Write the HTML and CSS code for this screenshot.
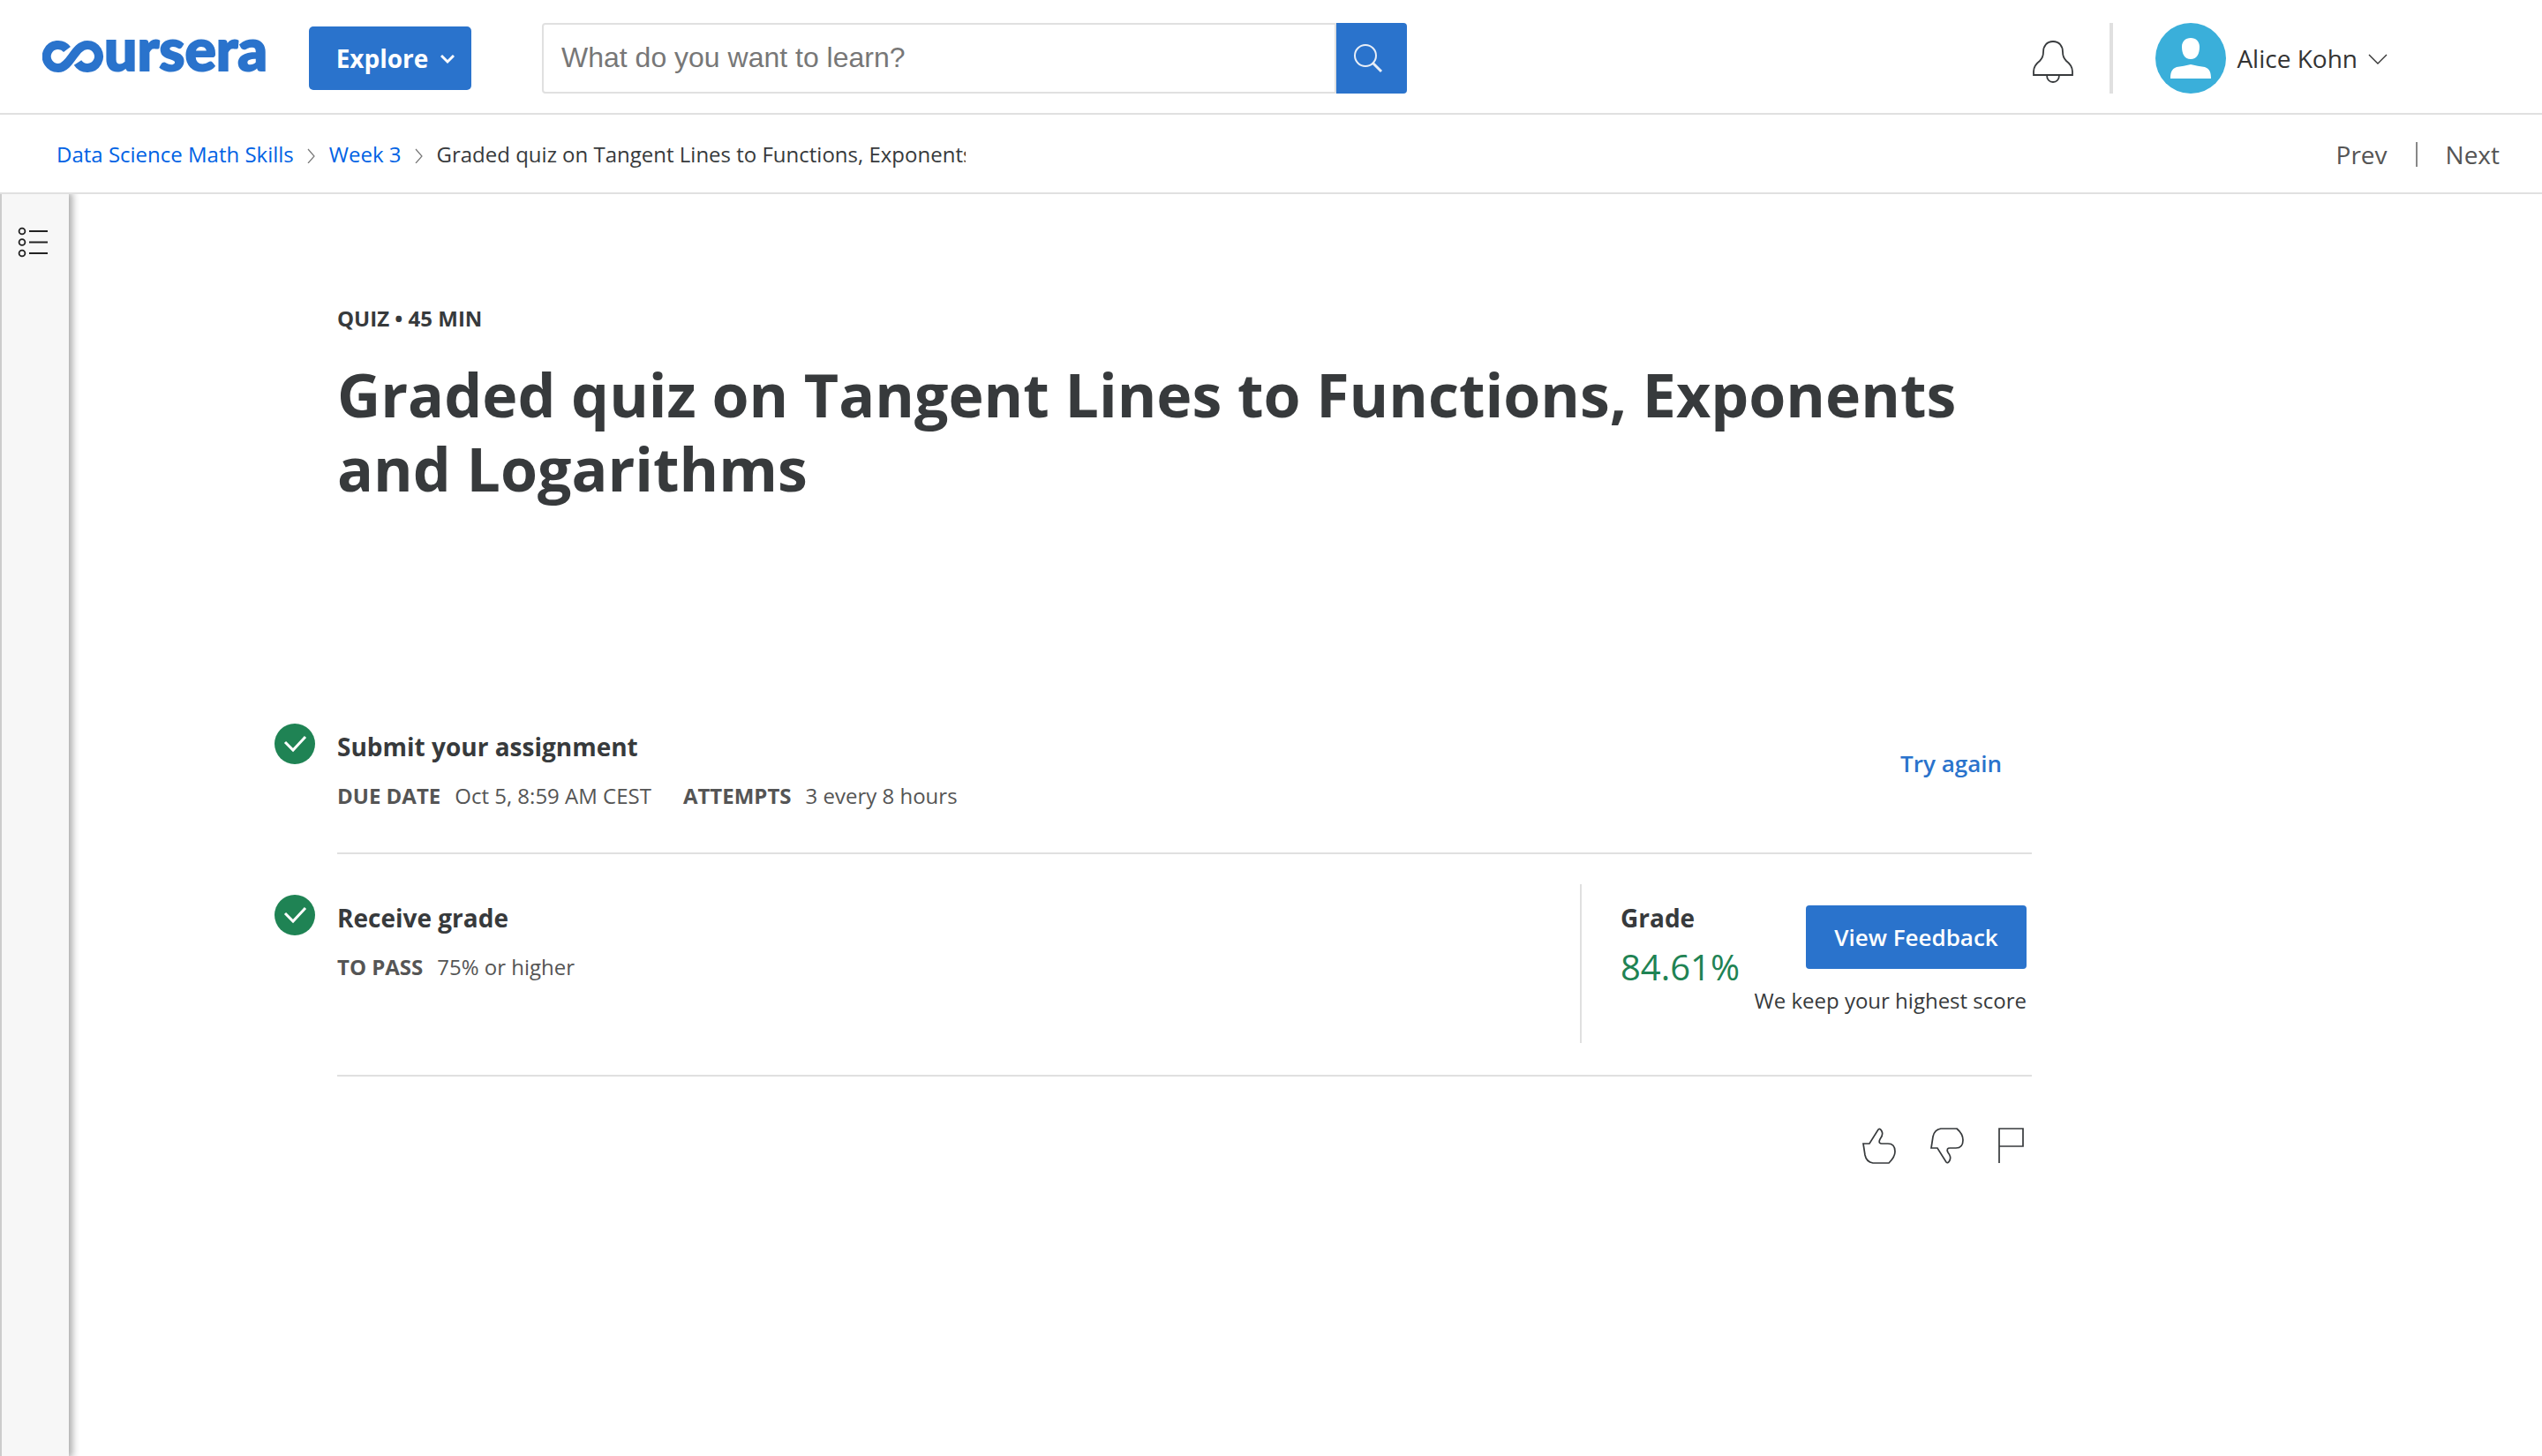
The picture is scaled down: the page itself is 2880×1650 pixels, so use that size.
FILE: index.html
```html
<!DOCTYPE html>
<html lang="en">
<head>
<meta charset="utf-8">
<title>Graded quiz on Tangent Lines to Functions, Exponents and Logarithms | Coursera</title>
<link rel="stylesheet" href="styles.css">
</head>
<body>
<header class="topbar">
  <a class="logo" href="#" aria-label="coursera">
    <svg width="256" height="88" viewBox="0 -26 256 88">
      <path d="M28 10A13 13 0 1 0 18 31C32 31 36 5 51 5A13 13 0 1 1 40 25" fill="none" stroke="currentColor" stroke-width="10"/>
      <text class="wordmark" x="70" y="34">ursera</text>
    </svg>
  </a>
  <button class="explore" type="button">Explore
    <svg width="16" height="14" viewBox="0 0 16 14"><path d="M1 4l7 7 7-7" fill="none" stroke="currentColor" stroke-width="3"/></svg>
  </button>
  <form class="search" role="search">
    <input class="search-field" type="text" aria-label="Search" placeholder="What do you want to learn?">
    <button class="search-button" type="submit" aria-label="Submit search">
      <svg width="34" height="34" viewBox="0 0 34 34"><g fill="none" stroke="currentColor" stroke-width="2"><circle cx="14" cy="14" r="12"/><path d="M22 22l10 10" stroke-width="3"/></g></svg>
    </button>
  </form>
  <div class="account">
    <button class="bell" type="button" aria-label="Notifications">
      <svg width="46" height="48" viewBox="0 0 46 48"><g fill="none" stroke="currentColor" stroke-width="1.8"><path d="M1 39V35C1 30 4 26 8 23C11 20 12 17 12 13C12 6 16 1 23 1S34 6 34 13C34 17 35 20 38 23C42 26 45 30 45 35V39Z"/><path d="M16 39C16 44 19 47 23 47S30 44 30 39"/></g></svg>
    </button>
    <button class="profile" type="button">
      <svg width="80" height="80" viewBox="0 0 80 80"><circle cx="40" cy="40" r="40" fill="#3aafda"/><path d="M40 17C34 17 30 21 30 27C30 35 33 41 40 41S50 35 50 27C50 21 46 17 40 17ZM17 63C17 57 18 52 24 50Q32 49 40 47Q48 49 56 50C62 52 63 57 63 63Z" fill="#fff"/></svg>
      <span>Alice Kohn</span>
      <svg width="22" height="14" viewBox="0 0 22 14"><path d="M1 3l10 10L21 3" fill="none" stroke="currentColor" stroke-width="1.4"/></svg>
    </button>
  </div>
</header>
<div class="subbar">
  <nav class="crumbs" aria-label="Breadcrumb">
    <a href="#">Data Science Math Skills</a>
    <svg width="10" height="20" viewBox="0 0 10 20"><path d="M1 4l7 8-7 8" fill="none" stroke="currentColor" stroke-width="1.2"/></svg>
    <a href="#">Week 3</a>
    <svg width="10" height="20" viewBox="0 0 10 20"><path d="M1 4l7 8-7 8" fill="none" stroke="currentColor" stroke-width="1.2"/></svg>
    <span class="crumb-current">Graded quiz on Tangent Lines to Functions, Exponents and Logarithms</span>
  </nav>
  <nav class="pager" aria-label="Items"><a href="#">Prev</a><a href="#">Next</a></nav>
</div>
<div class="body">
  <aside class="rail">
    <button type="button" aria-label="Open outline">
      <svg width="36" height="36" viewBox="0 0 36 36"><g fill="none" stroke="currentColor" stroke-width="1.8"><circle cx="5" cy="6" r="3.4"/><circle cx="5" cy="18.5" r="3.4"/><circle cx="5" cy="31" r="3.4"/><path d="M13 6h21M13 18.5h21M13 31h21"/></g></svg>
    </button>
  </aside>
  <main class="content">
    <p class="kind">QUIZ • 45 MIN</p>
    <h1>Graded quiz on Tangent Lines to Functions, Exponents and Logarithms</h1>
    <section class="step">
      <svg class="tick" width="46" height="46" viewBox="0 0 46 46"><circle cx="23" cy="23" r="23" fill="#1f8354"/><path d="M12 21l9 9 14-15" fill="none" stroke="#fff" stroke-width="3"/></svg>
      <div class="step-text">
        <h2>Submit your assignment</h2>
        <dl><div><dt>DUE DATE</dt><dd>Oct 5, 8:59 AM CEST</dd></div><div><dt>ATTEMPTS</dt><dd>3 every 8 hours</dd></div></dl>
      </div>
      <button class="retry" type="button">Try again</button>
    </section>
    <section class="step graded">
      <svg class="tick" width="46" height="46" viewBox="0 0 46 46"><circle cx="23" cy="23" r="23" fill="#1f8354"/><path d="M12 21l9 9 14-15" fill="none" stroke="#fff" stroke-width="3"/></svg>
      <div class="step-text">
        <h2>Receive grade</h2>
        <dl><div><dt>TO PASS</dt><dd>75% or higher</dd></div></dl>
      </div>
      <div class="result">
        <div class="grade"><h2>Grade</h2><p class="score">84.61%</p></div>
        <div class="feedback"><button class="primary" type="button">View Feedback</button><p>We keep your highest score</p></div>
      </div>
    </section>
    <div class="reactions">
      <button type="button" aria-label="Like"><svg width="38" height="42" viewBox="0 0 38 42"><path d="M1 18H8L18 2Q20 0 22 4Q24 8 20 13C18 17 20 18 22 18H29C35 18 37 21 37 27Q37 33 30 40H12C6 39 4 36 3 31Z" fill="none" stroke="currentColor" stroke-width="1.7"/></svg></button>
      <button type="button" aria-label="Dislike"><svg width="38" height="42" viewBox="0 0 38 42"><path d="M1 23H8L18 39Q20 41 22 37Q24 33 20 28C18 24 20 23 22 23H29C35 23 37 20 37 14Q37 7 30 1H12C6 2 4 5 3 10Z" fill="none" stroke="currentColor" stroke-width="1.7"/></svg></button>
      <button type="button" aria-label="Report"><svg width="30" height="42" viewBox="0 0 30 42"><path d="M1 40V1H28V21H1" fill="none" stroke="currentColor" stroke-width="1.7"/></svg></button>
    </div>
  </main>
</div>
</body>
</html>
```
FILE: styles.css
```css
* { box-sizing: border-box; }
body {
  margin: 0;
  min-height: 100vh;
  display: flex;
  flex-direction: column;
  background: #fff;
  color: #373a3c;
  font: 24px/36px "Open Sans", sans-serif;
}
h1, h2, p, dl, dd { margin: 0; }
a { text-decoration: none; }
svg { display: block; flex: none; }
button {
  margin: 0;
  padding: 0;
  border: 0;
  background: none;
  color: inherit;
  font: inherit;
  cursor: pointer;
}

.topbar {
  display: flex;
  align-items: center;
  height: 130px;
  padding: 0 175px 0 48px;
  border-bottom: 2px solid #e0e0e0;
}
.logo { color: #2a73cc; }
.wordmark {
  font: 900 66px Lato, sans-serif;
  fill: currentColor;
  stroke: currentColor;
  stroke-width: 2px;
}
.explore {
  display: flex;
  align-items: center;
  justify-content: center;
  gap: 14px;
  width: 184px;
  height: 72px;
  margin: 4px 80px 0 46px;
  padding-left: 12px;
  border-radius: 5px;
  background: #2a73cc;
  color: #fff;
  font-size: 28px;
  font-weight: 700;
}
.search { display: flex; width: 980px; height: 80px; margin-top: 4px; }
.search-field {
  flex: 1;
  min-width: 0;
  padding: 0 20px 2px;
  border: 2px solid #e0e0e0;
  border-radius: 4px 0 0 4px;
  background: #fff;
  font: 300 32px "Liberation Sans", sans-serif;
}
.search-field::placeholder { color: #777; opacity: 1; }
.search-button {
  display: flex;
  align-items: center;
  justify-content: center;
  width: 80px;
  padding-right: 8px;
  border-radius: 0 4px 4px 0;
  background: #2a73cc;
  color: #e8eef7;
}
.account { display: flex; align-items: center; margin: 4px 0 0 auto; }
.bell { padding: 8px 41px 0 0; }
.profile {
  display: flex;
  align-items: center;
  gap: 12px;
  padding-left: 48px;
  border-left: 4px solid #e0e0e0;
  color: #333;
  font-size: 28px;
}

.subbar {
  display: flex;
  align-items: center;
  justify-content: space-between;
  height: 90px;
  padding: 2px 48px 0 64px;
  border-bottom: 2px solid #e0e0e0;
}
.crumbs {
  display: flex;
  align-items: center;
  gap: 15px;
  width: 1030px;
  overflow: hidden;
  color: #777;
  white-space: nowrap;
}
.crumbs a { color: #0062e4; }
.crumb-current { overflow: hidden; color: #373a3c; }
.pager { display: flex; font-size: 28px; line-height: 28px; }
.pager a { color: #555; }
.pager a + a { margin-left: 32px; padding-left: 32px; border-left: 2px solid #888; }

.body { display: flex; flex: 1; }
.rail {
  display: flex;
  justify-content: center;
  align-items: flex-start;
  width: 78px;
  padding: 36px 5px 0 0;
  border-left: 2px solid #ccc;
  background: #f7f7f7;
  box-shadow: 2px 0 8px 2px #aaa;
  clip-path: inset(0 -12px 0 0);
  color: #222;
}
.content { flex: 1; max-width: 2224px; padding: 123px 0 60px 304px; }
.kind { font-weight: 700; }
h1 { margin-top: 26px; font-size: 68px; line-height: 84px; }
h2 { font-size: 28px; line-height: 36px; }
.step {
  display: flex;
  position: relative;
  min-height: 194px;
  border-bottom: 2px solid #e0e0e0;
}
h1 + .step { margin-top: 201px; }
.step-text { flex: 1; padding-top: 54px; }
.tick { position: absolute; left: -71px; top: 46px; }
dl { display: flex; gap: 36px; margin-top: 20px; color: #555; }
dl div { display: flex; gap: 16px; }
dt { font-weight: 700; }
.retry {
  align-self: flex-start;
  margin: 73px 34px 0 0;
  color: #2a73cc;
  font-size: 26px;
  font-weight: 600;
}
.graded { min-height: 252px; }
.result {
  display: flex;
  justify-content: space-between;
  width: 512px;
  margin: 34px 0 36px;
  padding: 20px 6px 0 44px;
  border-left: 2px solid #e0e0e0;
}
.score { margin-top: 14px; color: #1f8354; font-size: 40px; line-height: 48px; white-space: nowrap; }
.feedback { display: flex; flex-direction: column; align-items: flex-end; padding-top: 4px; white-space: nowrap; }
.feedback p { margin-top: 18px; }
.primary {
  width: 250px;
  height: 72px;
  border-radius: 4px;
  background: #2a73cc;
  color: #fff;
  font-size: 26px;
  font-weight: 600;
}
.reactions {
  display: flex;
  justify-content: flex-end;
  gap: 39px;
  padding: 58px 8px 0 0;
}
```
